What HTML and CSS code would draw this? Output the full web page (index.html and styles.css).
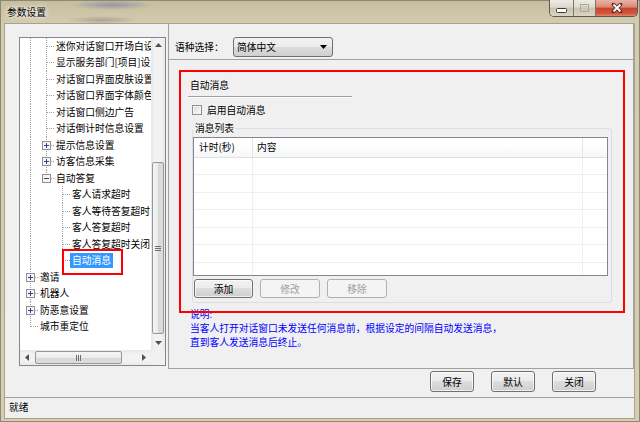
FILE: index.html
```html
<!DOCTYPE html>
<html lang="zh-CN">
<head>
<meta charset="utf-8">
<title>参数设置</title>
<link rel="stylesheet" href="styles.css">
</head>
<body>
<div class="window">
  <div class="titlebar">
    <span class="title">参数设置</span>
    <div class="caption">
      <span class="cbtn min"><svg width="11" height="5" viewBox="0 0 11 5"><rect x=".5" y=".5" width="10" height="4" rx="1" fill="#fff" stroke="#3a3a3a"/></svg></span>
      <span class="cbtn max"><svg width="9" height="8" viewBox="0 0 9 8"><rect x=".5" y=".5" width="8" height="7" fill="none" stroke="#aaa79c"/><rect x="2.5" y="2.5" width="4" height="3" fill="none" stroke="#c9c6bc"/></svg></span>
      <span class="cbtn close"><svg width="12" height="10" viewBox="0 0 12 10"><path d="M2.5 1.5L9.5 8.5M9.5 1.5L2.5 8.5" stroke="#4a2a24" stroke-width="3.6" stroke-linecap="round"/><path d="M2.5 1.5L9.5 8.5M9.5 1.5L2.5 8.5" stroke="#fff" stroke-width="1.8"/></svg></span>
    </div>
  </div>
  <div class="client">
    <div class="main">
      <div class="left">
        <div class="tree">
          <div class="tree-top">
            <div class="tree-items">
              <div class="row"><i class="g v"></i><i class="g t"></i><span class="lbl">迷你对话窗口开场白设置</span></div>
              <div class="row"><i class="g v"></i><i class="g t"></i><span class="lbl">显示服务部门[项目]设置</span></div>
              <div class="row"><i class="g v"></i><i class="g t"></i><span class="lbl">对话窗口界面皮肤设置</span></div>
              <div class="row"><i class="g v"></i><i class="g t"></i><span class="lbl">对话窗口界面字体颜色</span></div>
              <div class="row"><i class="g v"></i><i class="g t"></i><span class="lbl">对话窗口侧边广告</span></div>
              <div class="row"><i class="g v"></i><i class="g t"></i><span class="lbl">对话倒计时信息设置</span></div>
              <div class="row"><i class="g v"></i><i class="g t"><svg class="exp" width="9" height="9" viewBox="0 0 9 9"><rect x=".5" y=".5" width="8" height="8" fill="#f4f4f4" stroke="#919191"/><path d="M2 4.5h5M4.5 2v5" stroke="#2b4a8a"/></svg></i><span class="lbl">提示信息设置</span></div>
              <div class="row"><i class="g v"></i><i class="g t"><svg class="exp" width="9" height="9" viewBox="0 0 9 9"><rect x=".5" y=".5" width="8" height="8" fill="#f4f4f4" stroke="#919191"/><path d="M2 4.5h5M4.5 2v5" stroke="#2b4a8a"/></svg></i><span class="lbl">访客信息采集</span></div>
              <div class="row"><i class="g v"></i><i class="g l"><svg class="exp" width="9" height="9" viewBox="0 0 9 9"><rect x=".5" y=".5" width="8" height="8" fill="#f4f4f4" stroke="#919191"/><path d="M2 4.5h5" stroke="#2b4a8a"/></svg></i><span class="lbl">自动答复</span></div>
              <div class="row"><i class="g v"></i><i class="g"></i><i class="g t"></i><span class="lbl">客人请求超时</span></div>
              <div class="row"><i class="g v"></i><i class="g"></i><i class="g t"></i><span class="lbl">客人等待答复超时</span></div>
              <div class="row"><i class="g v"></i><i class="g"></i><i class="g t"></i><span class="lbl">客人答复超时</span></div>
              <div class="row"><i class="g v"></i><i class="g"></i><i class="g t"></i><span class="lbl">客人答复超时关闭</span></div>
              <div class="row"><i class="g v"></i><i class="g"></i><i class="g l"></i><span class="lbl sel">自动消息</span></div>
              <div class="row"><i class="g t"><svg class="exp" width="9" height="9" viewBox="0 0 9 9"><rect x=".5" y=".5" width="8" height="8" fill="#f4f4f4" stroke="#919191"/><path d="M2 4.5h5M4.5 2v5" stroke="#2b4a8a"/></svg></i><span class="lbl">邀请</span></div>
              <div class="row"><i class="g t"><svg class="exp" width="9" height="9" viewBox="0 0 9 9"><rect x=".5" y=".5" width="8" height="8" fill="#f4f4f4" stroke="#919191"/><path d="M2 4.5h5M4.5 2v5" stroke="#2b4a8a"/></svg></i><span class="lbl">机器人</span></div>
              <div class="row"><i class="g t"><svg class="exp" width="9" height="9" viewBox="0 0 9 9"><rect x=".5" y=".5" width="8" height="8" fill="#f4f4f4" stroke="#919191"/><path d="M2 4.5h5M4.5 2v5" stroke="#2b4a8a"/></svg></i><span class="lbl">防恶意设置</span></div>
              <div class="row"><i class="g l"></i><span class="lbl">城市重定位</span></div>
            </div>
            <div class="vscroll">
              <span class="arrow"><svg width="7" height="4" viewBox="0 0 7 4"><path d="M0 4L3.5 0 7 4z" fill="#505050"/></svg></span>
              <span class="vspace"></span>
              <span class="vthumb"><svg width="6" height="5" viewBox="0 0 6 5"><path d="M0 .5h6M0 2.5h6M0 4.5h6" stroke="#6e6e6e"/></svg></span>
              <span class="vfill"></span>
              <span class="arrow"><svg width="7" height="4" viewBox="0 0 7 4"><path d="M0 0L3.5 4 7 0z" fill="#505050"/></svg></span>
            </div>
          </div>
          <div class="tree-bottom">
            <div class="hscroll">
              <span class="harrow"><svg width="4" height="7" viewBox="0 0 4 7"><path d="M4 0L0 3.5 4 7z" fill="#505050"/></svg></span>
              <span class="hthumb"><svg width="5" height="6" viewBox="0 0 5 6"><path d="M.5 0v6M2.5 0v6M4.5 0v6" stroke="#6e6e6e"/></svg></span>
              <span class="hfill"></span>
              <span class="harrow"><svg width="4" height="7" viewBox="0 0 4 7"><path d="M0 0L4 3.5 0 7z" fill="#505050"/></svg></span>
            </div>
            <div class="corner"></div>
          </div>
        </div>
      </div>
      <div class="panel">
        <div class="lang-row">
          <span class="lang-label">语种选择：</span>
          <div class="combo"><span>简体中文</span><svg width="7" height="4" viewBox="0 0 7 4"><path d="M0 0L3.5 4 7 0z" fill="#000"/></svg></div>
        </div>
        <div class="content">
          <div class="heading">自动消息</div>
          <div class="check-row"><span class="checkbox"></span><span>启用自动消息</span></div>
          <fieldset class="group">
            <legend>消息列表</legend>
            <div class="list">
              <div class="list-head"><span class="col c1">计时(秒)</span><span class="col c2">内容</span><span class="col c3"></span></div>
              <div class="list-body"></div>
            </div>
            <div class="list-buttons">
              <button class="btn w59">添加</button>
              <button class="btn w60" disabled>修改</button>
              <button class="btn w60" disabled>移除</button>
            </div>
          </fieldset>
          <div class="note">说明:<br>当客人打开对话窗口未发送任何消息前，根据设定的间隔自动发送消息，<br>直到客人发送消息后终止。</div>
        </div>
      </div>
    </div>
    <div class="actions">
      <button class="btn w44">保存</button>
      <button class="btn w44">默认</button>
      <button class="btn w44">关闭</button>
    </div>
    <div class="status">就绪</div>
  </div>
  <div class="mark mark-tree"></div>
  <div class="mark mark-panel"></div>
</div>
</body>
</html>
```
FILE: styles.css
```css
* { box-sizing: border-box; }
html, body { margin: 0; padding: 0; }
body {
  width: 640px;
  height: 422px;
  overflow: hidden;
  font-family: "Noto Sans CJK SC", "Noto Sans", sans-serif;
  font-size: 9.75px;
  color: #000;
}

.window {
  position: relative;
  width: 640px;
  height: 422px;
  display: flex;
  flex-direction: column;
  background: linear-gradient(to bottom, #c6bd9d 0, #d4ccb0 24px, #d6ceb3 100%);
  box-shadow: inset 0 0 0 1px #8e8772;
}

.titlebar {
  height: 24px;
  flex: none;
  display: flex;
  align-items: flex-start;
  padding-left: 7px;
  background:
    radial-gradient(ellipse 42px 5px at 112px 5px, rgba(90, 100, 175, 0.45), transparent),
    radial-gradient(ellipse 36px 4px at 102px 20px, rgba(80, 80, 95, 0.3), transparent);
}
.title {
  line-height: 24px;
  text-shadow: 0 0 6px #fff, 0 0 3px rgba(255, 255, 255, 0.9);
}
.caption {
  margin-left: auto;
  margin-right: 2px;
  display: flex;
  height: 17px;
  border: 1px solid #5b5a55;
  border-top: 0;
  border-radius: 0 0 5px 5px;
  overflow: hidden;
}
.cbtn {
  display: flex;
  align-items: center;
  justify-content: center;
  height: 100%;
}
.min, .max {
  background: linear-gradient(#eeebe3, #dedacb 45%, #cbc4ae 50%, #dbd5c3);
  border-right: 1px solid #7a776e;
}
.min { width: 24px; padding-top: 4px; }
.max { width: 22px; }
.close {
  width: 41px;
  background: linear-gradient(#ebb2a4, #da8976 45%, #c7432b 50%, #d2583f 85%, #e4866f);
}

.client {
  flex: none;
  margin-left: 5px;
  width: 629px;
  height: 394px;
  background: #f0f0f0;
  display: flex;
  flex-direction: column;
  box-shadow: 0 0 0 1px rgba(120, 110, 85, 0.45);
}
.main {
  height: 345px;
  flex: none;
  display: flex;
}

/* tree */
.left {
  width: 163px;
  flex: none;
  padding: 13px 0 0 14px;
}
.tree {
  width: 147px;
  height: 329px;
  border: 1px solid #828790;
  background: #fff;
  display: flex;
  flex-direction: column;
}
.tree-top { height: 312px; display: flex; flex: none; }
.tree-items {
  flex: 1;
  overflow: hidden;
  padding-left: 2px;
  white-space: nowrap;
}
.row { display: flex; align-items: center; height: 16px; }
.row:nth-child(even) { height: 17px; }
.g {
  width: 16px;
  flex: none;
  align-self: stretch;
  display: flex;
  align-items: center;
  padding-left: 4px;
}
.v {
  background: repeating-linear-gradient(#a0a0a0 0 1px, transparent 1px 2px) 8px 0 / 1px 100% no-repeat;
}
.t {
  background:
    repeating-linear-gradient(to right, #a0a0a0 0 1px, transparent 1px 2px) 9px 8px / 7px 1px no-repeat,
    repeating-linear-gradient(#a0a0a0 0 1px, transparent 1px 2px) 8px 0 / 1px 100% no-repeat;
}
.l {
  background:
    repeating-linear-gradient(to right, #a0a0a0 0 1px, transparent 1px 2px) 9px 8px / 7px 1px no-repeat,
    repeating-linear-gradient(#a0a0a0 0 1px, transparent 1px 2px) 8px 0 / 1px 9px no-repeat;
}
.exp { display: block; }
.lbl { line-height: 15px; padding: 0 2px; }
.lbl.sel { background: #3399ff; color: #fff; }

.vscroll {
  width: 14px;
  flex: none;
  display: flex;
  flex-direction: column;
  background: linear-gradient(to right, #e6e6e6, #f2f2f2 25%, #f2f2f2 75%, #e8e8e8);
}
.arrow {
  height: 14px;
  flex: none;
  display: flex;
  align-items: center;
  justify-content: center;
}
.vspace { height: 110px; flex: none; }
.vthumb {
  height: 172px;
  flex: none;
  margin: 0 1px;
  border: 1px solid #979797;
  border-radius: 2px;
  background: linear-gradient(to right, #f5f5f5, #ebebeb 50%, #d9d9d9 51%, #dcdcdc);
  display: flex;
  align-items: center;
  justify-content: center;
}
.vfill { flex: 1; }

.tree-bottom { height: 15px; flex: none; display: flex; }
.hscroll {
  flex: 1;
  display: flex;
  background: linear-gradient(#e6e6e6, #f2f2f2 25%, #f2f2f2 75%, #e8e8e8);
}
.harrow {
  width: 14px;
  flex: none;
  display: flex;
  align-items: center;
  justify-content: center;
}
.hthumb {
  width: 87px;
  flex: none;
  margin: 1px 0 1px 1px;
  border: 1px solid #979797;
  border-radius: 2px;
  background: linear-gradient(#f5f5f5, #ebebeb 50%, #d9d9d9 51%, #dcdcdc);
  display: flex;
  align-items: center;
  justify-content: center;
}
.hfill { flex: 1; }
.corner { width: 14px; flex: none; background: #f0f0f0; }

/* right panel */
.panel {
  flex: 1;
  border-left: 1px solid #a0a0a0;
  border-right: 1px solid #a0a0a0;
  border-bottom: 1px solid #a0a0a0;
  display: flex;
  flex-direction: column;
}
.lang-row {
  display: flex;
  align-items: center;
  padding: 13px 0 2px 6px;
  border-bottom: 1px solid #a0a0a0;
}
.lang-label { width: 58px; flex: none; }
.combo {
  width: 100px;
  height: 20px;
  border: 1px solid #707070;
  border-radius: 3px;
  background: linear-gradient(#f2f2f2, #ebebeb 50%, #dddddd 50%, #cfcfcf);
  display: flex;
  align-items: center;
  justify-content: space-between;
  padding: 0 5px 0 3px;
}

.content { padding-left: 19px; }
.heading {
  margin-top: 17px;
  width: 164px;
  padding: 0 0 3px 2px;
  line-height: 16px;
  border-bottom: 1px solid #a0a0a0;
  box-shadow: 0 1px 0 #fff;
}
.check-row {
  display: flex;
  align-items: center;
  gap: 5px;
  height: 13px;
  margin-top: 6px;
  padding-left: 4px;
}
.checkbox {
  width: 10px;
  height: 10px;
  flex: none;
  border: 1px solid #8e8f8f;
  background: linear-gradient(135deg, #d2d2d2, #f0f0f0 65%, #fdfdfd);
  box-shadow: inset 0 0 0 1px #f6f6f6;
}

.group {
  margin: 6px 0 0 4px;
  width: 420px;
  min-width: 0;
  padding: 2px 3px 4px 0;
  border: 1px solid #d5dfe5;
  border-radius: 3px;
}
.group legend {
  padding: 0 2px;
  margin-left: 0;
  line-height: 13px;
}
.list {
  height: 139px;
  border: 1px solid #828790;
  background: #fff;
  display: flex;
  flex-direction: column;
}
.list-head {
  height: 20px;
  flex: none;
  display: flex;
  border-bottom: 1px solid #e0e0e0;
  background: linear-gradient(#fff 40%, #f5f6f7);
}
.col { line-height: 19px; }
.c1 { width: 59px; padding-left: 5px; border-right: 1px solid #e5e5e5; }
.c2 { width: 330px; padding-left: 4px; border-right: 1px solid #e5e5e5; }
.c3 { flex: 1; }
.list-body {
  flex: 1;
  background:
    linear-gradient(#efefef, #efefef) 58px 0 / 1px 100% no-repeat,
    linear-gradient(#efefef, #efefef) 388px 0 / 1px 100% no-repeat,
    repeating-linear-gradient(to bottom, #fff 0 16.5px, #efefef 16.5px 17.5px);
}
.list-buttons {
  display: flex;
  gap: 7px;
  margin-top: 3px;
  padding-left: 1px;
}

.btn {
  font: inherit;
  color: #000;
  height: 19px;
  padding: 0;
  border: 1px solid #707070;
  border-radius: 3px;
  background: linear-gradient(#f2f2f2 0%, #ebebeb 49%, #dddddd 50%, #cfcfcf 100%);
  box-shadow: inset 0 0 0 1px rgba(255, 255, 255, 0.7);
  display: flex;
  align-items: center;
  justify-content: center;
}
.btn:disabled {
  border-color: #adb2b5;
  background: #f4f4f4;
  color: #a0a0a0;
  box-shadow: none;
}
.w59 { width: 59px; }
.w60 { width: 60px; }
.w44 { width: 44px; height: 21px; }

.note {
  margin-top: 4px;
  padding-left: 2px;
  line-height: 14.2px;
  color: #0000ff;
}

.actions {
  height: 28px;
  flex: none;
  display: flex;
  justify-content: flex-end;
  align-items: flex-start;
  gap: 17px;
  padding: 2px 38px 0 0;
}
.status {
  flex: 1;
  border-top: 1px solid #a0a0a0;
  padding-left: 4px;
  line-height: 18px;
}

/* red annotation frames drawn over the screenshot */
.mark {
  position: absolute;
  border: 2px solid #ff0000;
}
.mark-tree { left: 62px; top: 249px; width: 61px; height: 26px; }
.mark-panel { left: 179px; top: 70px; width: 446px; height: 243px; }
```
